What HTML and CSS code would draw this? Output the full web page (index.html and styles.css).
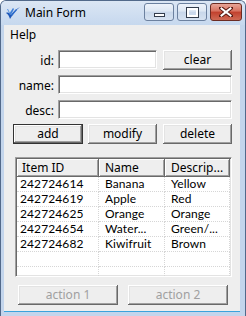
FILE: index.html
```html
<!DOCTYPE html>
<html lang="en">
<head>
    <meta charset="UTF-8">
    <title>Main Form</title>
    <link rel="stylesheet" href="styles.css">
</head>
<body>
    <div class="window">
        <!-- title bar -->
        <div class="titlebar">
            <svg class="app-icon" viewBox="0 0 16 16" width="16" height="16">
                <path d="M1 8 C3 9 4 11 5 14 C8 9 11 5 15 2 C11 4 8 7 6 10 C5 8 3 7 1 8 Z" fill="#1d57b8"/>
                <path d="M4 9 L8 3 L9 4 L6 10 Z" fill="#3f7fd8"/>
                <path d="M6 10 L11 4 L12 5 L7 11 Z" fill="#2f6dcc"/>
                <path d="M2 4 L4 8 L5 8 L3 4 Z" fill="#5a92e0"/>
            </svg>
            <span class="title">Main Form</span>
            <div class="caption">
                <span class="cap-btn min"><i></i></span>
                <span class="cap-btn max"><i></i></span>
                <span class="cap-btn close">
                    <svg viewBox="0 0 14 10" width="14" height="10">
                        <path d="M2 1 L12 9 M12 1 L2 9" stroke="#5a1c14" stroke-width="4" stroke-linecap="square"/>
                        <path d="M2.5 1.5 L11.5 8.5 M11.5 1.5 L2.5 8.5" stroke="#fff" stroke-width="2" stroke-linecap="square"/>
                    </svg>
                </span>
            </div>
        </div>

        <div class="client">
            <div class="menubar"><span>Help</span></div>

            <div class="form">
                <label class="lbl">id:</label>
                <input class="text" type="text">
                <button class="btn clear">clear</button>

                <label class="lbl">name:</label>
                <input class="text wide" type="text">

                <label class="lbl">desc:</label>
                <input class="text wide" type="text">
            </div>

            <div class="btn-row">
                <button class="btn default add">add</button>
                <button class="btn modify">modify</button>
                <button class="btn delete">delete</button>
            </div>

            <div class="listview">
                <div class="lv-header">
                    <span class="hd first">Item ID</span>
                    <span class="hd">Name</span>
                    <span class="hd">Descrip...</span>
                </div>
                <div class="lv-rows">
                    <div class="row"><span class="cell first">242724614</span><span class="cell">Banana</span><span class="cell">Yellow</span></div>
                    <div class="row"><span class="cell first">242724619</span><span class="cell">Apple</span><span class="cell">Red</span></div>
                    <div class="row"><span class="cell first">242724625</span><span class="cell">Orange</span><span class="cell">Orange</span></div>
                    <div class="row"><span class="cell first">242724654</span><span class="cell">Water...</span><span class="cell">Green/...</span></div>
                    <div class="row"><span class="cell first">242724682</span><span class="cell">Kiwifruit</span><span class="cell">Brown</span></div>
                    <div class="row"><span class="cell first"></span><span class="cell"></span><span class="cell"></span></div>
                    <div class="row"><span class="cell first"></span><span class="cell"></span><span class="cell"></span></div>
                </div>
            </div>

            <div class="footer">
                <button class="btn action" disabled>action 1</button>
                <button class="btn action" disabled>action 2</button>
            </div>
        </div>
    </div>
</body>
</html>
```

FILE: styles.css
```css
body {
    margin: 0;
    overflow: hidden;
    background: #fff;
    font-family: "Noto Sans", "Open Sans", sans-serif;
    font-size: 12px;
    color: #000;
}

.window {
    width: 246px;
    height: 316px;
    box-sizing: border-box;
    border: 1px solid #52698a;
    border-bottom: none;
    border-radius: 6px 6px 0 0;
    padding: 0 5px 5px 3px;
    background: #c3d5ec;
    display: flex;
    flex-direction: column;
    overflow: hidden;
}

/* ---- title bar ---- */
.titlebar {
    height: 24px;
    display: flex;
    align-items: center;
    margin: 0 -5px 0 -3px;
    padding-left: 4px;
    background: linear-gradient(#dbe6f4, #c6d8ee);
}
.app-icon {
    flex: none;
}
.title {
    margin-left: 4px;
    line-height: 16px;
}
.caption {
    margin-left: auto;
    margin-right: 3px;
    align-self: flex-start;
    margin-top: 2px;
    display: flex;
    gap: 3px;
}
.cap-btn {
    height: 18px;
    box-sizing: border-box;
    border: 1px solid #6c819f;
    border-radius: 3px;
    display: flex;
    align-items: center;
    justify-content: center;
    background: linear-gradient(#eef3fa 0%, #dde7f3 45%, #c8d7ea 50%, #d6e2f1 100%);
}
.min, .max {
    width: 30px;
}
.close {
    width: 32px;
    border-color: #6b2b22;
    background: linear-gradient(#e8a597 0%, #d7705e 45%, #c1402d 50%, #cf6a55 100%);
}
.min i {
    width: 9px;
    height: 2px;
    margin-top: 6px;
    background: #fff;
    border: 1px solid #333d4c;
}
.max i {
    width: 7px;
    height: 5px;
    border: 2px solid #fff;
    outline: 1px solid #333d4c;
}

/* ---- client area ---- */
.client {
    flex: 1;
    background: #eeeeee;
    box-shadow: 0 1px 0 #3aa3dc;
    display: flex;
    flex-direction: column;
}
.menubar {
    height: 19px;
    line-height: 19px;
    padding-left: 6px;
}

.form {
    margin-top: 6px;
    padding-left: 9px;
    display: grid;
    grid-template-columns: 45px 99px 6px 69px;
    grid-auto-rows: 20px;
    row-gap: 5px;
    align-items: center;
}
.lbl {
    grid-column: 1;
    text-align: right;
    padding-right: 4px;
}
.text {
    grid-column: 2;
    height: 19px;
    align-self: start;
    box-sizing: border-box;
    margin: 0;
    padding: 0 2px;
    background: #fff;
    border: 1px solid;
    border-color: #a0a0a0 #fff #fff #a0a0a0;
    box-shadow: inset 1px 1px #696969, inset -1px -1px #e3e3e3;
    font: inherit;
    outline: none;
}
.text.wide {
    grid-column: 2 / 5;
}

.btn {
    height: 20px;
    box-sizing: border-box;
    margin: 0;
    padding: 0;
    border: none;
    background: #eeeeee;
    box-shadow: inset -1px -1px #696969, inset 1px 1px #fff, inset -2px -2px #a0a0a0, inset 2px 2px #e3e3e3;
    font: inherit;
    color: #000;
    line-height: 18px;
}
.clear {
    grid-column: 4;
}
.btn.default {
    border: 1px solid #333;
}

.btn-row {
    margin-top: 4px;
    padding-left: 9px;
    display: flex;
}
.add {
    width: 70px;
}
.modify {
    width: 69px;
    margin-left: 5px;
}
.delete {
    width: 69px;
    margin-left: 6px;
}

/* ---- list view ---- */
.listview {
    margin: 13px 0 0 11px;
    width: 217px;
    height: 120px;
    box-sizing: border-box;
    background: #fff;
    border: 1px solid;
    border-color: #a0a0a0 #fff #fff #a0a0a0;
    box-shadow: inset 1px 1px #696969, inset -1px -1px #e3e3e3;
    padding: 1px;
    overflow: hidden;
}
.lv-header, .row {
    display: grid;
    grid-template-columns: 82px 66px 65px;
}
.hd {
    height: 18px;
    line-height: 17px;
    padding-left: 6px;
    background: #eeeeee;
    box-shadow: inset -1px -1px #696969, inset 1px 1px #fff, inset -2px -2px #a0a0a0;
    white-space: nowrap;
}
.hd.first {
    padding-left: 5px;
}
.cell {
    height: 15px;
    box-sizing: border-box;
    font-family: Lato, "Noto Sans", sans-serif;
    letter-spacing: 0.1px;
    line-height: 14px;
    padding-left: 6px;
    border-right: 1px dotted #d6d6d6;
    border-bottom: 1px dotted #d6d6d6;
    white-space: nowrap;
}
.cell.first {
    padding-left: 3px;
}

/* ---- footer ---- */
.footer {
    margin: 8px 0 0 14px;
    display: flex;
    gap: 10px;
}
.action {
    width: 100px;
    color: #a0a0a0;
}
```
